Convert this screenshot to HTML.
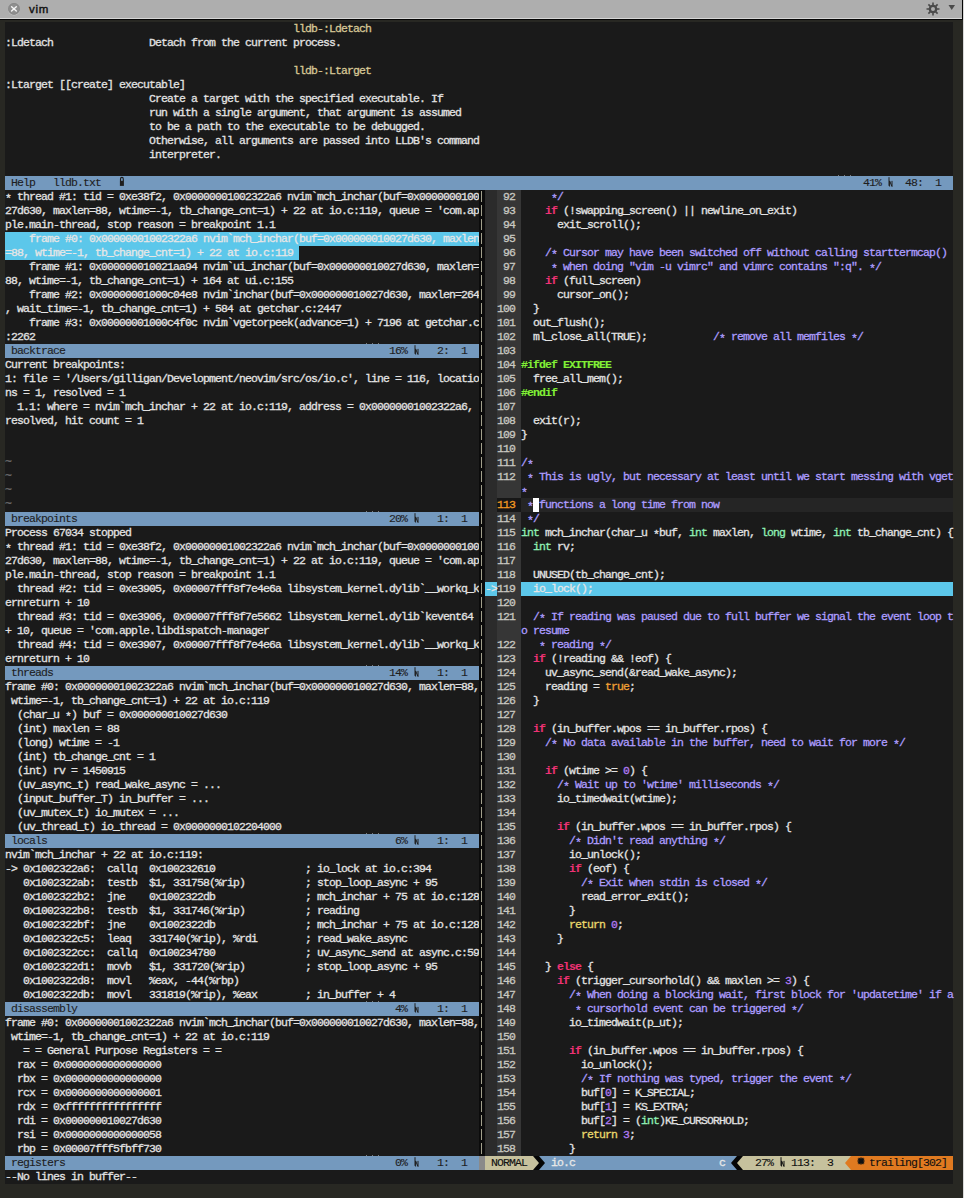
<!DOCTYPE html>
<html><head><meta charset="utf-8"><title>vim</title>
<style>
html,body{margin:0;padding:0;}
body{width:964px;height:1198px;position:relative;overflow:hidden;background:#282823;}
.r{position:absolute;display:block;}
.t{position:absolute;height:14px;line-height:14px;white-space:pre;font-family:"Liberation Mono",monospace;font-size:11.5px;letter-spacing:-0.9011px;-webkit-text-stroke:0.3px;}
</style></head><body>
<div class="r" style="left:0;top:0;width:963px;height:18px;background:#aeaeae"></div>
<div class="r" style="left:0;top:18px;width:963px;height:1px;background:#d6d6d6"></div>
<div class="r" style="left:0;top:19px;width:963px;height:1px;background:#050505"></div>
<div class="r" style="left:962px;top:0;width:1px;height:20px;background:#050505"></div>
<div class="r" style="left:963px;top:0;width:1px;height:1198px;background:#d9d9d9"></div>
<svg class="r" style="left:7px;top:2px" width="14" height="15" viewBox="0 0 14 15"><circle cx="7" cy="7.6" r="5.9" fill="#d2d2d2" opacity="0.8"/><circle cx="7" cy="6.9" r="5.9" fill="#8f8f8f"/><circle cx="7" cy="6.9" r="5.4" fill="none" stroke="#858585" stroke-width="0.8"/><path d="M4.6 4.7L9.3 9.1M9.3 4.7L4.6 9.1" stroke="#f6f6f6" stroke-width="1.4" stroke-linecap="round"/></svg>
<div class="r" style="left:29px;top:2.5px;height:14px;line-height:14px;font:11.5px 'Liberation Sans',sans-serif;-webkit-text-stroke:0.4px #111;letter-spacing:0.7px;color:#111">vim</div>
<svg class="r" style="left:926px;top:2px" width="14" height="14" viewBox="0 0 14 14"><g stroke="#4a4a4a" stroke-width="1.6"><path d="M7 0.5V13.5M0.5 7H13.5M2.4 2.4L11.6 11.6M11.6 2.4L2.4 11.6"/></g><circle cx="7" cy="7" r="4.3" fill="#4a4a4a"/><circle cx="7" cy="7" r="2" fill="#aeaeae"/></svg>
<svg class="r" style="left:947px;top:4px" width="9" height="8" viewBox="0 0 9 8"><path d="M1.5 1H8L4.75 6Z" fill="#4a4a4a"/></svg>
<div class="r" style="left:5px;top:22px;width:948px;height:1162px;background:#1a1a1a"></div>
<div class="t" style="left:293px;top:22px;color:#d6c795">lldb-:Ldetach</div>
<div class="t" style="left:5px;top:36px;color:#e2e2e2">:Ldetach</div>
<div class="t" style="left:149px;top:36px;color:#e2e2e2">Detach from the current process.</div>
<div class="t" style="left:293px;top:64px;color:#d6c795">lldb-:Ltarget</div>
<div class="t" style="left:5px;top:78px;color:#e2e2e2">:Ltarget [[create] executable]</div>
<div class="t" style="left:149px;top:92px;color:#e2e2e2">Create a target with the specified executable. If</div>
<div class="t" style="left:149px;top:106px;color:#e2e2e2">run with a single argument, that argument is assumed</div>
<div class="t" style="left:149px;top:120px;color:#e2e2e2">to be a path to the executable to be debugged.</div>
<div class="t" style="left:149px;top:134px;color:#e2e2e2">Otherwise, all arguments are passed into LLDB's command</div>
<div class="t" style="left:149px;top:148px;color:#e2e2e2">interpreter.</div>
<div class="r" style="left:5px;top:176px;width:948px;height:14px;background:#7499be"></div>
<div class="t" style="left:11px;top:176px;color:#1e1e1e;-webkit-text-stroke:0.12px">Help</div>
<div class="t" style="left:53px;top:176px;color:#1e1e1e;-webkit-text-stroke:0.12px">lldb.txt</div>
<svg class="r" style="left:119px;top:176px" width="6" height="14" viewBox="0 0 6 14"><path d="M1.5 5V3A1.4 1.6 0 0 1 4.3 3V5" stroke="#1e1e1e" stroke-width="1.1" fill="none"/><rect x="0.9" y="4.8" width="4" height="5.1" fill="#1e1e1e"/></svg>
<div class="t" style="left:863px;top:176px;color:#1e1e1e;-webkit-text-stroke:0.12px">41%</div>
<svg class="r" style="left:887px;top:176px" width="6" height="14" viewBox="0 0 6 14"><path d="M2 1.2V9.8M2.6 10.5V4.9L5 10.5V4.9" stroke="#1e1e1e" stroke-width="1" fill="none"/></svg>
<div class="t" style="left:905px;top:176px;color:#1e1e1e;-webkit-text-stroke:0.12px">48:</div>
<div class="t" style="left:935px;top:176px;color:#1e1e1e;-webkit-text-stroke:0.12px">1</div>
<div class="r" style="left:5px;top:232px;width:474px;height:14px;background:#5cc7ea"></div>
<div class="r" style="left:5px;top:246px;width:294px;height:14px;background:#5cc7ea"></div>
<div class="t" style="left:5px;top:191.5px;color:#e2e2e2">*</div>
<div class="t" style="left:17px;top:190px;color:#e2e2e2">thread #1: tid = 0xe38f2, 0x00000001002322a6 nvim`mch_inchar(buf=0x0000000100</div>
<div class="t" style="left:5px;top:204px;color:#e2e2e2">27d630, maxlen=88, wtime=-1, tb_change_cnt=1) + 22 at io.c:119, queue = 'com.ap</div>
<div class="t" style="left:5px;top:218px;color:#e2e2e2">ple.main-thread, stop reason = breakpoint 1.1</div>
<div class="t" style="left:29px;top:232px;color:#e6e6e6">frame #0: 0x00000001002322a6 nvim`mch_inchar(buf=0x000000010027d630, maxlen</div>
<div class="t" style="left:5px;top:246px;color:#e6e6e6">=88, wtime=-1, tb_change_cnt=1) + 22 at io.c:119</div>
<div class="t" style="left:29px;top:260px;color:#e2e2e2">frame #1: 0x000000010021aa94 nvim`ui_inchar(buf=0x000000010027d630, maxlen=</div>
<div class="t" style="left:5px;top:274px;color:#e2e2e2">88, wtime=-1, tb_change_cnt=1) + 164 at ui.c:155</div>
<div class="t" style="left:29px;top:288px;color:#e2e2e2">frame #2: 0x00000001000c04e8 nvim`inchar(buf=0x000000010027d630, maxlen=264</div>
<div class="t" style="left:5px;top:302px;color:#e2e2e2">, wait_time=-1, tb_change_cnt=1) + 584 at getchar.c:2447</div>
<div class="t" style="left:29px;top:316px;color:#e2e2e2">frame #3: 0x00000001000c4f0c nvim`vgetorpeek(advance=1) + 7196 at getchar.c</div>
<div class="t" style="left:5px;top:330px;color:#e2e2e2">:2262</div>
<div class="t" style="left:5px;top:358px;color:#e2e2e2">Current breakpoints:</div>
<div class="t" style="left:5px;top:372px;color:#e2e2e2">1: file = '/Users/gilligan/Development/neovim/src/os/io.c', line = 116, locatio</div>
<div class="t" style="left:5px;top:386px;color:#e2e2e2">ns = 1, resolved = 1</div>
<div class="t" style="left:17px;top:400px;color:#e2e2e2">1.1: where = nvim`mch_inchar + 22 at io.c:119, address = 0x00000001002322a6,</div>
<div class="t" style="left:5px;top:414px;color:#e2e2e2">resolved, hit count = 1</div>
<div class="t" style="left:5px;top:526px;color:#e2e2e2">Process 67034 stopped</div>
<div class="t" style="left:5px;top:541.5px;color:#e2e2e2">*</div>
<div class="t" style="left:17px;top:540px;color:#e2e2e2">thread #1: tid = 0xe38f2, 0x00000001002322a6 nvim`mch_inchar(buf=0x0000000100</div>
<div class="t" style="left:5px;top:554px;color:#e2e2e2">27d630, maxlen=88, wtime=-1, tb_change_cnt=1) + 22 at io.c:119, queue = 'com.ap</div>
<div class="t" style="left:5px;top:568px;color:#e2e2e2">ple.main-thread, stop reason = breakpoint 1.1</div>
<div class="t" style="left:17px;top:582px;color:#e2e2e2">thread #2: tid = 0xe3905, 0x00007fff8f7e4e6a libsystem_kernel.dylib`__workq_k</div>
<div class="t" style="left:5px;top:596px;color:#e2e2e2">ernreturn + 10</div>
<div class="t" style="left:17px;top:610px;color:#e2e2e2">thread #3: tid = 0xe3906, 0x00007fff8f7e5662 libsystem_kernel.dylib`kevent64</div>
<div class="t" style="left:5px;top:624px;color:#e2e2e2">+ 10, queue = 'com.apple.libdispatch-manager</div>
<div class="t" style="left:17px;top:638px;color:#e2e2e2">thread #4: tid = 0xe3907, 0x00007fff8f7e4e6a libsystem_kernel.dylib`__workq_k</div>
<div class="t" style="left:5px;top:652px;color:#e2e2e2">ernreturn + 10</div>
<div class="t" style="left:5px;top:680px;color:#e2e2e2">frame #0: 0x00000001002322a6 nvim`mch_inchar(buf=0x000000010027d630, maxlen=88,</div>
<div class="t" style="left:11px;top:694px;color:#e2e2e2">wtime=-1, tb_change_cnt=1) + 22 at io.c:119</div>
<div class="t" style="left:17px;top:708px;color:#e2e2e2">(char_u</div>
<div class="t" style="left:65px;top:709.5px;color:#e2e2e2">*</div>
<div class="t" style="left:71px;top:708px;color:#e2e2e2">) buf = 0x000000010027d630</div>
<div class="t" style="left:17px;top:722px;color:#e2e2e2">(int) maxlen = 88</div>
<div class="t" style="left:17px;top:736px;color:#e2e2e2">(long) wtime = -1</div>
<div class="t" style="left:17px;top:750px;color:#e2e2e2">(int) tb_change_cnt = 1</div>
<div class="t" style="left:17px;top:764px;color:#e2e2e2">(int) rv = 1450915</div>
<div class="t" style="left:17px;top:778px;color:#e2e2e2">(uv_async_t) read_wake_async = ...</div>
<div class="t" style="left:17px;top:792px;color:#e2e2e2">(input_buffer_T) in_buffer = ...</div>
<div class="t" style="left:17px;top:806px;color:#e2e2e2">(uv_mutex_t) io_mutex = ...</div>
<div class="t" style="left:17px;top:820px;color:#e2e2e2">(uv_thread_t) io_thread = 0x0000000102204000</div>
<div class="t" style="left:5px;top:848px;color:#e2e2e2">nvim`mch_inchar + 22 at io.c:119:</div>
<div class="t" style="left:5px;top:1016px;color:#e2e2e2">frame #0: 0x00000001002322a6 nvim`mch_inchar(buf=0x000000010027d630, maxlen=88,</div>
<div class="t" style="left:11px;top:1030px;color:#e2e2e2">wtime=-1, tb_change_cnt=1) + 22 at io.c:119</div>
<div class="t" style="left:23px;top:1044px;color:#e2e2e2">= = General Purpose Registers = =</div>
<div class="t" style="left:17px;top:1058px;color:#e2e2e2">rax = 0x0000000000000000</div>
<div class="t" style="left:17px;top:1072px;color:#e2e2e2">rbx = 0x0000000000000000</div>
<div class="t" style="left:17px;top:1086px;color:#e2e2e2">rcx = 0x0000000000000001</div>
<div class="t" style="left:17px;top:1100px;color:#e2e2e2">rdx = 0xffffffffffffffff</div>
<div class="t" style="left:17px;top:1114px;color:#e2e2e2">rdi = 0x000000010027d630</div>
<div class="t" style="left:17px;top:1128px;color:#e2e2e2">rsi = 0x0000000000000058</div>
<div class="t" style="left:17px;top:1142px;color:#e2e2e2">rbp = 0x00007fff5fbff730</div>
<div class="t" style="left:5px;top:862px;color:#e2e2e2">-&gt; 0x1002322a6:</div>
<div class="t" style="left:107px;top:862px;color:#e2e2e2">callq</div>
<div class="t" style="left:149px;top:862px;color:#e2e2e2">0x100232610</div>
<div class="t" style="left:305px;top:862px;color:#e2e2e2">; io_lock at io.c:394</div>
<div class="t" style="left:23px;top:876px;color:#e2e2e2">0x1002322ab:</div>
<div class="t" style="left:107px;top:876px;color:#e2e2e2">testb</div>
<div class="t" style="left:149px;top:876px;color:#e2e2e2">$1, 331758(%rip)</div>
<div class="t" style="left:305px;top:876px;color:#e2e2e2">; stop_loop_async + 95</div>
<div class="t" style="left:23px;top:890px;color:#e2e2e2">0x1002322b2:</div>
<div class="t" style="left:107px;top:890px;color:#e2e2e2">jne</div>
<div class="t" style="left:149px;top:890px;color:#e2e2e2">0x1002322db</div>
<div class="t" style="left:305px;top:890px;color:#e2e2e2">; mch_inchar + 75 at io.c:128</div>
<div class="t" style="left:23px;top:904px;color:#e2e2e2">0x1002322b8:</div>
<div class="t" style="left:107px;top:904px;color:#e2e2e2">testb</div>
<div class="t" style="left:149px;top:904px;color:#e2e2e2">$1, 331746(%rip)</div>
<div class="t" style="left:305px;top:904px;color:#e2e2e2">; reading</div>
<div class="t" style="left:23px;top:918px;color:#e2e2e2">0x1002322bf:</div>
<div class="t" style="left:107px;top:918px;color:#e2e2e2">jne</div>
<div class="t" style="left:149px;top:918px;color:#e2e2e2">0x1002322db</div>
<div class="t" style="left:305px;top:918px;color:#e2e2e2">; mch_inchar + 75 at io.c:128</div>
<div class="t" style="left:23px;top:932px;color:#e2e2e2">0x1002322c5:</div>
<div class="t" style="left:107px;top:932px;color:#e2e2e2">leaq</div>
<div class="t" style="left:149px;top:932px;color:#e2e2e2">331740(%rip), %rdi</div>
<div class="t" style="left:305px;top:932px;color:#e2e2e2">; read_wake_async</div>
<div class="t" style="left:23px;top:946px;color:#e2e2e2">0x1002322cc:</div>
<div class="t" style="left:107px;top:946px;color:#e2e2e2">callq</div>
<div class="t" style="left:149px;top:946px;color:#e2e2e2">0x100234780</div>
<div class="t" style="left:305px;top:946px;color:#e2e2e2">; uv_async_send at async.c:59</div>
<div class="t" style="left:23px;top:960px;color:#e2e2e2">0x1002322d1:</div>
<div class="t" style="left:107px;top:960px;color:#e2e2e2">movb</div>
<div class="t" style="left:149px;top:960px;color:#e2e2e2">$1, 331720(%rip)</div>
<div class="t" style="left:305px;top:960px;color:#e2e2e2">; stop_loop_async + 95</div>
<div class="t" style="left:23px;top:974px;color:#e2e2e2">0x1002322d8:</div>
<div class="t" style="left:107px;top:974px;color:#e2e2e2">movl</div>
<div class="t" style="left:149px;top:974px;color:#e2e2e2">%eax, -44(%rbp)</div>
<div class="t" style="left:23px;top:988px;color:#e2e2e2">0x1002322db:</div>
<div class="t" style="left:107px;top:988px;color:#e2e2e2">movl</div>
<div class="t" style="left:149px;top:988px;color:#e2e2e2">331819(%rip), %eax</div>
<div class="t" style="left:305px;top:988px;color:#e2e2e2">; in_buffer + 4</div>
<div class="t" style="left:5px;top:456px;color:#727272;margin-top:-1px">~</div>
<div class="t" style="left:5px;top:470px;color:#727272;margin-top:-1px">~</div>
<div class="t" style="left:5px;top:484px;color:#727272;margin-top:-1px">~</div>
<div class="t" style="left:5px;top:498px;color:#727272;margin-top:-1px">~</div>
<div class="r" style="left:5px;top:344px;width:474px;height:14px;background:#7499be"></div>
<div class="t" style="left:11px;top:344px;color:#1e1e1e;-webkit-text-stroke:0.12px">backtrace</div>
<div class="t" style="left:389px;top:344px;color:#1e1e1e;-webkit-text-stroke:0.12px">16%</div>
<svg class="r" style="left:413px;top:344px" width="6" height="14" viewBox="0 0 6 14"><path d="M2 1.2V9.8M2.6 10.5V4.9L5 10.5V4.9" stroke="#1e1e1e" stroke-width="1" fill="none"/></svg>
<div class="t" style="left:437px;top:344px;color:#1e1e1e;-webkit-text-stroke:0.12px">2:</div>
<div class="t" style="left:461px;top:344px;color:#1e1e1e;-webkit-text-stroke:0.12px">1</div>
<div class="r" style="left:5px;top:512px;width:474px;height:14px;background:#7499be"></div>
<div class="t" style="left:11px;top:512px;color:#1e1e1e;-webkit-text-stroke:0.12px">breakpoints</div>
<div class="t" style="left:389px;top:512px;color:#1e1e1e;-webkit-text-stroke:0.12px">20%</div>
<svg class="r" style="left:413px;top:512px" width="6" height="14" viewBox="0 0 6 14"><path d="M2 1.2V9.8M2.6 10.5V4.9L5 10.5V4.9" stroke="#1e1e1e" stroke-width="1" fill="none"/></svg>
<div class="t" style="left:437px;top:512px;color:#1e1e1e;-webkit-text-stroke:0.12px">1:</div>
<div class="t" style="left:461px;top:512px;color:#1e1e1e;-webkit-text-stroke:0.12px">1</div>
<div class="r" style="left:5px;top:666px;width:474px;height:14px;background:#7499be"></div>
<div class="t" style="left:11px;top:666px;color:#1e1e1e;-webkit-text-stroke:0.12px">threads</div>
<div class="t" style="left:389px;top:666px;color:#1e1e1e;-webkit-text-stroke:0.12px">14%</div>
<svg class="r" style="left:413px;top:666px" width="6" height="14" viewBox="0 0 6 14"><path d="M2 1.2V9.8M2.6 10.5V4.9L5 10.5V4.9" stroke="#1e1e1e" stroke-width="1" fill="none"/></svg>
<div class="t" style="left:437px;top:666px;color:#1e1e1e;-webkit-text-stroke:0.12px">1:</div>
<div class="t" style="left:461px;top:666px;color:#1e1e1e;-webkit-text-stroke:0.12px">1</div>
<div class="r" style="left:5px;top:834px;width:474px;height:14px;background:#7499be"></div>
<div class="t" style="left:11px;top:834px;color:#1e1e1e;-webkit-text-stroke:0.12px">locals</div>
<div class="t" style="left:395px;top:834px;color:#1e1e1e;-webkit-text-stroke:0.12px">6%</div>
<svg class="r" style="left:413px;top:834px" width="6" height="14" viewBox="0 0 6 14"><path d="M2 1.2V9.8M2.6 10.5V4.9L5 10.5V4.9" stroke="#1e1e1e" stroke-width="1" fill="none"/></svg>
<div class="t" style="left:437px;top:834px;color:#1e1e1e;-webkit-text-stroke:0.12px">1:</div>
<div class="t" style="left:461px;top:834px;color:#1e1e1e;-webkit-text-stroke:0.12px">1</div>
<div class="r" style="left:5px;top:1002px;width:474px;height:14px;background:#7499be"></div>
<div class="t" style="left:11px;top:1002px;color:#1e1e1e;-webkit-text-stroke:0.12px">disassembly</div>
<div class="t" style="left:395px;top:1002px;color:#1e1e1e;-webkit-text-stroke:0.12px">4%</div>
<svg class="r" style="left:413px;top:1002px" width="6" height="14" viewBox="0 0 6 14"><path d="M2 1.2V9.8M2.6 10.5V4.9L5 10.5V4.9" stroke="#1e1e1e" stroke-width="1" fill="none"/></svg>
<div class="t" style="left:437px;top:1002px;color:#1e1e1e;-webkit-text-stroke:0.12px">1:</div>
<div class="t" style="left:461px;top:1002px;color:#1e1e1e;-webkit-text-stroke:0.12px">1</div>
<div class="r" style="left:5px;top:1156px;width:474px;height:14px;background:#7499be"></div>
<div class="t" style="left:11px;top:1156px;color:#1e1e1e;-webkit-text-stroke:0.12px">registers</div>
<div class="t" style="left:395px;top:1156px;color:#1e1e1e;-webkit-text-stroke:0.12px">0%</div>
<svg class="r" style="left:413px;top:1156px" width="6" height="14" viewBox="0 0 6 14"><path d="M2 1.2V9.8M2.6 10.5V4.9L5 10.5V4.9" stroke="#1e1e1e" stroke-width="1" fill="none"/></svg>
<div class="t" style="left:437px;top:1156px;color:#1e1e1e;-webkit-text-stroke:0.12px">1:</div>
<div class="t" style="left:461px;top:1156px;color:#1e1e1e;-webkit-text-stroke:0.12px">1</div>
<div class="r" style="left:366px;top:343px;width:1px;height:1px;background:#7d7d7d"></div>
<div class="r" style="left:372px;top:343px;width:1px;height:1px;background:#7d7d7d"></div>
<div class="r" style="left:378px;top:343px;width:1px;height:1px;background:#7d7d7d"></div>
<div class="r" style="left:366px;top:511px;width:1px;height:1px;background:#7d7d7d"></div>
<div class="r" style="left:372px;top:511px;width:1px;height:1px;background:#7d7d7d"></div>
<div class="r" style="left:378px;top:511px;width:1px;height:1px;background:#7d7d7d"></div>
<div class="r" style="left:366px;top:665px;width:1px;height:1px;background:#7d7d7d"></div>
<div class="r" style="left:372px;top:665px;width:1px;height:1px;background:#7d7d7d"></div>
<div class="r" style="left:378px;top:665px;width:1px;height:1px;background:#7d7d7d"></div>
<div class="r" style="left:366px;top:833px;width:1px;height:1px;background:#7d7d7d"></div>
<div class="r" style="left:372px;top:833px;width:1px;height:1px;background:#7d7d7d"></div>
<div class="r" style="left:378px;top:833px;width:1px;height:1px;background:#7d7d7d"></div>
<div class="r" style="left:366px;top:1001px;width:1px;height:1px;background:#7d7d7d"></div>
<div class="r" style="left:372px;top:1001px;width:1px;height:1px;background:#7d7d7d"></div>
<div class="r" style="left:378px;top:1001px;width:1px;height:1px;background:#7d7d7d"></div>
<div class="r" style="left:366px;top:1155px;width:1px;height:1px;background:#7d7d7d"></div>
<div class="r" style="left:372px;top:1155px;width:1px;height:1px;background:#7d7d7d"></div>
<div class="r" style="left:378px;top:1155px;width:1px;height:1px;background:#7d7d7d"></div>
<div class="r" style="left:838px;top:175px;width:1px;height:1px;background:#7d7d7d"></div>
<div class="r" style="left:844px;top:175px;width:1px;height:1px;background:#7d7d7d"></div>
<div class="r" style="left:850px;top:175px;width:1px;height:1px;background:#7d7d7d"></div>
<div class="r" style="left:479px;top:190px;width:6px;height:966px;background:#0b0b0b"></div>
<div class="r" style="left:481px;top:191px;width:1.3px;height:11px;background:#a2a08c"></div>
<div class="r" style="left:481px;top:205px;width:1.3px;height:11px;background:#a2a08c"></div>
<div class="r" style="left:481px;top:219px;width:1.3px;height:11px;background:#a2a08c"></div>
<div class="r" style="left:481px;top:233px;width:1.3px;height:11px;background:#a2a08c"></div>
<div class="r" style="left:481px;top:247px;width:1.3px;height:11px;background:#a2a08c"></div>
<div class="r" style="left:481px;top:261px;width:1.3px;height:11px;background:#a2a08c"></div>
<div class="r" style="left:481px;top:275px;width:1.3px;height:11px;background:#a2a08c"></div>
<div class="r" style="left:481px;top:289px;width:1.3px;height:11px;background:#a2a08c"></div>
<div class="r" style="left:481px;top:303px;width:1.3px;height:11px;background:#a2a08c"></div>
<div class="r" style="left:481px;top:317px;width:1.3px;height:11px;background:#a2a08c"></div>
<div class="r" style="left:481px;top:331px;width:1.3px;height:11px;background:#a2a08c"></div>
<div class="r" style="left:481px;top:345px;width:1.3px;height:11px;background:#a2a08c"></div>
<div class="r" style="left:481px;top:359px;width:1.3px;height:11px;background:#a2a08c"></div>
<div class="r" style="left:481px;top:373px;width:1.3px;height:11px;background:#a2a08c"></div>
<div class="r" style="left:481px;top:387px;width:1.3px;height:11px;background:#a2a08c"></div>
<div class="r" style="left:481px;top:401px;width:1.3px;height:11px;background:#a2a08c"></div>
<div class="r" style="left:481px;top:415px;width:1.3px;height:11px;background:#a2a08c"></div>
<div class="r" style="left:481px;top:429px;width:1.3px;height:11px;background:#a2a08c"></div>
<div class="r" style="left:481px;top:443px;width:1.3px;height:11px;background:#a2a08c"></div>
<div class="r" style="left:481px;top:457px;width:1.3px;height:11px;background:#a2a08c"></div>
<div class="r" style="left:481px;top:471px;width:1.3px;height:11px;background:#a2a08c"></div>
<div class="r" style="left:481px;top:485px;width:1.3px;height:11px;background:#a2a08c"></div>
<div class="r" style="left:481px;top:499px;width:1.3px;height:11px;background:#a2a08c"></div>
<div class="r" style="left:481px;top:513px;width:1.3px;height:11px;background:#a2a08c"></div>
<div class="r" style="left:481px;top:527px;width:1.3px;height:11px;background:#a2a08c"></div>
<div class="r" style="left:481px;top:541px;width:1.3px;height:11px;background:#a2a08c"></div>
<div class="r" style="left:481px;top:555px;width:1.3px;height:11px;background:#a2a08c"></div>
<div class="r" style="left:481px;top:569px;width:1.3px;height:11px;background:#a2a08c"></div>
<div class="r" style="left:481px;top:583px;width:1.3px;height:11px;background:#a2a08c"></div>
<div class="r" style="left:481px;top:597px;width:1.3px;height:11px;background:#a2a08c"></div>
<div class="r" style="left:481px;top:611px;width:1.3px;height:11px;background:#a2a08c"></div>
<div class="r" style="left:481px;top:625px;width:1.3px;height:11px;background:#a2a08c"></div>
<div class="r" style="left:481px;top:639px;width:1.3px;height:11px;background:#a2a08c"></div>
<div class="r" style="left:481px;top:653px;width:1.3px;height:11px;background:#a2a08c"></div>
<div class="r" style="left:481px;top:667px;width:1.3px;height:11px;background:#a2a08c"></div>
<div class="r" style="left:481px;top:681px;width:1.3px;height:11px;background:#a2a08c"></div>
<div class="r" style="left:481px;top:695px;width:1.3px;height:11px;background:#a2a08c"></div>
<div class="r" style="left:481px;top:709px;width:1.3px;height:11px;background:#a2a08c"></div>
<div class="r" style="left:481px;top:723px;width:1.3px;height:11px;background:#a2a08c"></div>
<div class="r" style="left:481px;top:737px;width:1.3px;height:11px;background:#a2a08c"></div>
<div class="r" style="left:481px;top:751px;width:1.3px;height:11px;background:#a2a08c"></div>
<div class="r" style="left:481px;top:765px;width:1.3px;height:11px;background:#a2a08c"></div>
<div class="r" style="left:481px;top:779px;width:1.3px;height:11px;background:#a2a08c"></div>
<div class="r" style="left:481px;top:793px;width:1.3px;height:11px;background:#a2a08c"></div>
<div class="r" style="left:481px;top:807px;width:1.3px;height:11px;background:#a2a08c"></div>
<div class="r" style="left:481px;top:821px;width:1.3px;height:11px;background:#a2a08c"></div>
<div class="r" style="left:481px;top:835px;width:1.3px;height:11px;background:#a2a08c"></div>
<div class="r" style="left:481px;top:849px;width:1.3px;height:11px;background:#a2a08c"></div>
<div class="r" style="left:481px;top:863px;width:1.3px;height:11px;background:#a2a08c"></div>
<div class="r" style="left:481px;top:877px;width:1.3px;height:11px;background:#a2a08c"></div>
<div class="r" style="left:481px;top:891px;width:1.3px;height:11px;background:#a2a08c"></div>
<div class="r" style="left:481px;top:905px;width:1.3px;height:11px;background:#a2a08c"></div>
<div class="r" style="left:481px;top:919px;width:1.3px;height:11px;background:#a2a08c"></div>
<div class="r" style="left:481px;top:933px;width:1.3px;height:11px;background:#a2a08c"></div>
<div class="r" style="left:481px;top:947px;width:1.3px;height:11px;background:#a2a08c"></div>
<div class="r" style="left:481px;top:961px;width:1.3px;height:11px;background:#a2a08c"></div>
<div class="r" style="left:481px;top:975px;width:1.3px;height:11px;background:#a2a08c"></div>
<div class="r" style="left:481px;top:989px;width:1.3px;height:11px;background:#a2a08c"></div>
<div class="r" style="left:481px;top:1003px;width:1.3px;height:11px;background:#a2a08c"></div>
<div class="r" style="left:481px;top:1017px;width:1.3px;height:11px;background:#a2a08c"></div>
<div class="r" style="left:481px;top:1031px;width:1.3px;height:11px;background:#a2a08c"></div>
<div class="r" style="left:481px;top:1045px;width:1.3px;height:11px;background:#a2a08c"></div>
<div class="r" style="left:481px;top:1059px;width:1.3px;height:11px;background:#a2a08c"></div>
<div class="r" style="left:481px;top:1073px;width:1.3px;height:11px;background:#a2a08c"></div>
<div class="r" style="left:481px;top:1087px;width:1.3px;height:11px;background:#a2a08c"></div>
<div class="r" style="left:481px;top:1101px;width:1.3px;height:11px;background:#a2a08c"></div>
<div class="r" style="left:481px;top:1115px;width:1.3px;height:11px;background:#a2a08c"></div>
<div class="r" style="left:481px;top:1129px;width:1.3px;height:11px;background:#a2a08c"></div>
<div class="r" style="left:481px;top:1143px;width:1.3px;height:11px;background:#a2a08c"></div>
<div class="r" style="left:479px;top:1156px;width:6px;height:14px;background:#8a8a8a"></div>
<div class="r" style="left:485px;top:190px;width:12px;height:966px;background:#2b2b2b"></div>
<div class="r" style="left:497px;top:190px;width:24px;height:966px;background:#363636"></div>
<div class="t" style="left:503px;top:190px;color:#c9c9c2">92</div>
<div class="t" style="left:551px;top:191.5px;color:#ad9dff">*</div>
<div class="t" style="left:557px;top:190px;color:#ad9dff">/</div>
<div class="t" style="left:503px;top:204px;color:#c9c9c2">93</div>
<div class="t" style="left:545px;top:204px;color:#ee3274;font-weight:bold;-webkit-text-stroke:0.1px">if</div>
<div class="t" style="left:563px;top:204px;color:#e2e2e2">(!swapping_screen() || newline_on_exit)</div>
<div class="t" style="left:503px;top:218px;color:#c9c9c2">94</div>
<div class="t" style="left:557px;top:218px;color:#e2e2e2">exit_scroll();</div>
<div class="t" style="left:503px;top:232px;color:#c9c9c2">95</div>
<div class="t" style="left:503px;top:246px;color:#c9c9c2">96</div>
<div class="t" style="left:545px;top:246px;color:#ad9dff">/</div>
<div class="t" style="left:551px;top:247.5px;color:#ad9dff">*</div>
<div class="t" style="left:563px;top:246px;color:#ad9dff">Cursor may have been switched off without calling starttermcap()</div>
<div class="t" style="left:503px;top:260px;color:#c9c9c2">97</div>
<div class="t" style="left:551px;top:261.5px;color:#ad9dff">*</div>
<div class="t" style="left:563px;top:260px;color:#ad9dff">when doing "vim -u vimrc" and vimrc contains ":q".</div>
<div class="t" style="left:869px;top:261.5px;color:#ad9dff">*</div>
<div class="t" style="left:875px;top:260px;color:#ad9dff">/</div>
<div class="t" style="left:503px;top:274px;color:#c9c9c2">98</div>
<div class="t" style="left:545px;top:274px;color:#ee3274;font-weight:bold;-webkit-text-stroke:0.1px">if</div>
<div class="t" style="left:563px;top:274px;color:#e2e2e2">(full_screen)</div>
<div class="t" style="left:503px;top:288px;color:#c9c9c2">99</div>
<div class="t" style="left:557px;top:288px;color:#e2e2e2">cursor_on();</div>
<div class="t" style="left:497px;top:302px;color:#c9c9c2">100</div>
<div class="t" style="left:533px;top:302px;color:#e2e2e2">}</div>
<div class="t" style="left:497px;top:316px;color:#c9c9c2">101</div>
<div class="t" style="left:533px;top:316px;color:#e2e2e2">out_flush();</div>
<div class="t" style="left:497px;top:330px;color:#c9c9c2">102</div>
<div class="t" style="left:533px;top:330px;color:#e2e2e2">ml_close_all(TRUE);</div>
<div class="t" style="left:713px;top:330px;color:#ad9dff">/</div>
<div class="t" style="left:719px;top:331.5px;color:#ad9dff">*</div>
<div class="t" style="left:731px;top:330px;color:#ad9dff">remove all memfiles</div>
<div class="t" style="left:851px;top:331.5px;color:#ad9dff">*</div>
<div class="t" style="left:857px;top:330px;color:#ad9dff">/</div>
<div class="t" style="left:497px;top:344px;color:#c9c9c2">103</div>
<div class="t" style="left:497px;top:358px;color:#c9c9c2">104</div>
<div class="t" style="left:521px;top:358px;color:#82f036;font-weight:bold;-webkit-text-stroke:0.1px">#ifdef EXITFREE</div>
<div class="t" style="left:497px;top:372px;color:#c9c9c2">105</div>
<div class="t" style="left:533px;top:372px;color:#e2e2e2">free_all_mem();</div>
<div class="t" style="left:497px;top:386px;color:#c9c9c2">106</div>
<div class="t" style="left:521px;top:386px;color:#82f036;font-weight:bold;-webkit-text-stroke:0.1px">#endif</div>
<div class="t" style="left:497px;top:400px;color:#c9c9c2">107</div>
<div class="t" style="left:497px;top:414px;color:#c9c9c2">108</div>
<div class="t" style="left:533px;top:414px;color:#e2e2e2">exit(r);</div>
<div class="t" style="left:497px;top:428px;color:#c9c9c2">109</div>
<div class="t" style="left:521px;top:428px;color:#e2e2e2">}</div>
<div class="t" style="left:497px;top:442px;color:#c9c9c2">110</div>
<div class="t" style="left:497px;top:456px;color:#c9c9c2">111</div>
<div class="t" style="left:521px;top:456px;color:#ad9dff">/</div>
<div class="t" style="left:527px;top:457.5px;color:#ad9dff">*</div>
<div class="t" style="left:497px;top:470px;color:#c9c9c2">112</div>
<div class="t" style="left:527px;top:471.5px;color:#ad9dff">*</div>
<div class="t" style="left:539px;top:470px;color:#ad9dff">This is ugly, but necessary at least until we start messing with vget</div>
<div class="t" style="left:521px;top:485.5px;color:#ad9dff">*</div>
<div class="r" style="left:497px;top:498px;width:24px;height:14px;background:#171717"></div>
<div class="r" style="left:521px;top:498px;width:432px;height:14px;background:#252525"></div>
<div class="t" style="left:497px;top:498px;color:#f39a22">113</div>
<div class="r" style="left:533px;top:498px;width:6px;height:14px;background:#ffffff"></div>
<div class="t" style="left:527px;top:499.5px;color:#ad9dff">*</div>
<div class="t" style="left:539px;top:498px;color:#ad9dff">functions a long time from now</div>
<div class="t" style="left:497px;top:512px;color:#c9c9c2">114</div>
<div class="t" style="left:527px;top:513.5px;color:#ad9dff">*</div>
<div class="t" style="left:533px;top:512px;color:#ad9dff">/</div>
<div class="t" style="left:497px;top:526px;color:#c9c9c2">115</div>
<div class="t" style="left:521px;top:526px;color:#8ff0b4">int</div>
<div class="t" style="left:545px;top:526px;color:#e2e2e2">mch_inchar(char_u</div>
<div class="t" style="left:653px;top:527.5px;color:#e2e2e2">*</div>
<div class="t" style="left:659px;top:526px;color:#e2e2e2">buf,</div>
<div class="t" style="left:689px;top:526px;color:#8ff0b4">int</div>
<div class="t" style="left:713px;top:526px;color:#e2e2e2">maxlen,</div>
<div class="t" style="left:761px;top:526px;color:#8ff0b4">long</div>
<div class="t" style="left:791px;top:526px;color:#e2e2e2">wtime,</div>
<div class="t" style="left:833px;top:526px;color:#8ff0b4">int</div>
<div class="t" style="left:857px;top:526px;color:#e2e2e2">tb_change_cnt) {</div>
<div class="t" style="left:497px;top:540px;color:#c9c9c2">116</div>
<div class="t" style="left:533px;top:540px;color:#8ff0b4">int</div>
<div class="t" style="left:557px;top:540px;color:#e2e2e2">rv;</div>
<div class="t" style="left:497px;top:554px;color:#c9c9c2">117</div>
<div class="t" style="left:497px;top:568px;color:#c9c9c2">118</div>
<div class="t" style="left:533px;top:568px;color:#e2e2e2">UNUSED(tb_change_cnt);</div>
<div class="r" style="left:485px;top:582px;width:12px;height:14px;background:#5cc7ea"></div>
<div class="r" style="left:521px;top:582px;width:432px;height:14px;background:#5cc7ea"></div>
<div class="t" style="left:485px;top:582px;color:#e6e6e6">-&gt;</div>
<div class="t" style="left:497px;top:582px;color:#c9c9c2">119</div>
<div class="t" style="left:533px;top:582px;color:#e6e6e6">io_lock();</div>
<div class="t" style="left:497px;top:596px;color:#c9c9c2">120</div>
<div class="t" style="left:497px;top:610px;color:#c9c9c2">121</div>
<div class="t" style="left:533px;top:610px;color:#ad9dff">/</div>
<div class="t" style="left:539px;top:611.5px;color:#ad9dff">*</div>
<div class="t" style="left:551px;top:610px;color:#ad9dff">If reading was paused due to full buffer we signal the event loop t</div>
<div class="t" style="left:521px;top:624px;color:#ad9dff">o resume</div>
<div class="t" style="left:497px;top:638px;color:#c9c9c2">122</div>
<div class="t" style="left:539px;top:639.5px;color:#ad9dff">*</div>
<div class="t" style="left:551px;top:638px;color:#ad9dff">reading</div>
<div class="t" style="left:599px;top:639.5px;color:#ad9dff">*</div>
<div class="t" style="left:605px;top:638px;color:#ad9dff">/</div>
<div class="t" style="left:497px;top:652px;color:#c9c9c2">123</div>
<div class="t" style="left:533px;top:652px;color:#ee3274;font-weight:bold;-webkit-text-stroke:0.1px">if</div>
<div class="t" style="left:551px;top:652px;color:#e2e2e2">(!reading &amp;&amp; !eof) {</div>
<div class="t" style="left:497px;top:666px;color:#c9c9c2">124</div>
<div class="t" style="left:545px;top:666px;color:#e2e2e2">uv_async_send(&amp;read_wake_async);</div>
<div class="t" style="left:497px;top:680px;color:#c9c9c2">125</div>
<div class="t" style="left:545px;top:680px;color:#e2e2e2">reading =</div>
<div class="t" style="left:605px;top:680px;color:#f0a035">true</div>
<div class="t" style="left:629px;top:680px;color:#e2e2e2">;</div>
<div class="t" style="left:497px;top:694px;color:#c9c9c2">126</div>
<div class="t" style="left:533px;top:694px;color:#e2e2e2">}</div>
<div class="t" style="left:497px;top:708px;color:#c9c9c2">127</div>
<div class="t" style="left:497px;top:722px;color:#c9c9c2">128</div>
<div class="t" style="left:533px;top:722px;color:#ee3274;font-weight:bold;-webkit-text-stroke:0.1px">if</div>
<div class="t" style="left:551px;top:722px;color:#e2e2e2">(in_buffer.wpos == in_buffer.rpos) {</div>
<div class="t" style="left:497px;top:736px;color:#c9c9c2">129</div>
<div class="t" style="left:545px;top:736px;color:#ad9dff">/</div>
<div class="t" style="left:551px;top:737.5px;color:#ad9dff">*</div>
<div class="t" style="left:563px;top:736px;color:#ad9dff">No data available in the buffer, need to wait for more</div>
<div class="t" style="left:893px;top:737.5px;color:#ad9dff">*</div>
<div class="t" style="left:899px;top:736px;color:#ad9dff">/</div>
<div class="t" style="left:497px;top:750px;color:#c9c9c2">130</div>
<div class="t" style="left:497px;top:764px;color:#c9c9c2">131</div>
<div class="t" style="left:545px;top:764px;color:#ee3274;font-weight:bold;-webkit-text-stroke:0.1px">if</div>
<div class="t" style="left:563px;top:764px;color:#e2e2e2">(wtime &gt;=</div>
<div class="t" style="left:623px;top:764px;color:#b07af2">0</div>
<div class="t" style="left:629px;top:764px;color:#e2e2e2">) {</div>
<div class="t" style="left:497px;top:778px;color:#c9c9c2">132</div>
<div class="t" style="left:557px;top:778px;color:#ad9dff">/</div>
<div class="t" style="left:563px;top:779.5px;color:#ad9dff">*</div>
<div class="t" style="left:575px;top:778px;color:#ad9dff">Wait up to 'wtime' milliseconds</div>
<div class="t" style="left:767px;top:779.5px;color:#ad9dff">*</div>
<div class="t" style="left:773px;top:778px;color:#ad9dff">/</div>
<div class="t" style="left:497px;top:792px;color:#c9c9c2">133</div>
<div class="t" style="left:557px;top:792px;color:#e2e2e2">io_timedwait(wtime);</div>
<div class="t" style="left:497px;top:806px;color:#c9c9c2">134</div>
<div class="t" style="left:497px;top:820px;color:#c9c9c2">135</div>
<div class="t" style="left:557px;top:820px;color:#ee3274;font-weight:bold;-webkit-text-stroke:0.1px">if</div>
<div class="t" style="left:575px;top:820px;color:#e2e2e2">(in_buffer.wpos == in_buffer.rpos) {</div>
<div class="t" style="left:497px;top:834px;color:#c9c9c2">136</div>
<div class="t" style="left:569px;top:834px;color:#ad9dff">/</div>
<div class="t" style="left:575px;top:835.5px;color:#ad9dff">*</div>
<div class="t" style="left:587px;top:834px;color:#ad9dff">Didn't read anything</div>
<div class="t" style="left:713px;top:835.5px;color:#ad9dff">*</div>
<div class="t" style="left:719px;top:834px;color:#ad9dff">/</div>
<div class="t" style="left:497px;top:848px;color:#c9c9c2">137</div>
<div class="t" style="left:569px;top:848px;color:#e2e2e2">io_unlock();</div>
<div class="t" style="left:497px;top:862px;color:#c9c9c2">138</div>
<div class="t" style="left:569px;top:862px;color:#ee3274;font-weight:bold;-webkit-text-stroke:0.1px">if</div>
<div class="t" style="left:587px;top:862px;color:#e2e2e2">(eof) {</div>
<div class="t" style="left:497px;top:876px;color:#c9c9c2">139</div>
<div class="t" style="left:581px;top:876px;color:#ad9dff">/</div>
<div class="t" style="left:587px;top:877.5px;color:#ad9dff">*</div>
<div class="t" style="left:599px;top:876px;color:#ad9dff">Exit when stdin is closed</div>
<div class="t" style="left:755px;top:877.5px;color:#ad9dff">*</div>
<div class="t" style="left:761px;top:876px;color:#ad9dff">/</div>
<div class="t" style="left:497px;top:890px;color:#c9c9c2">140</div>
<div class="t" style="left:581px;top:890px;color:#e2e2e2">read_error_exit();</div>
<div class="t" style="left:497px;top:904px;color:#c9c9c2">141</div>
<div class="t" style="left:569px;top:904px;color:#e2e2e2">}</div>
<div class="t" style="left:497px;top:918px;color:#c9c9c2">142</div>
<div class="t" style="left:569px;top:918px;color:#ead96c">return</div>
<div class="t" style="left:611px;top:918px;color:#b07af2">0</div>
<div class="t" style="left:617px;top:918px;color:#e2e2e2">;</div>
<div class="t" style="left:497px;top:932px;color:#c9c9c2">143</div>
<div class="t" style="left:557px;top:932px;color:#e2e2e2">}</div>
<div class="t" style="left:497px;top:946px;color:#c9c9c2">144</div>
<div class="t" style="left:497px;top:960px;color:#c9c9c2">145</div>
<div class="t" style="left:545px;top:960px;color:#e2e2e2">}</div>
<div class="t" style="left:557px;top:960px;color:#ee3274;font-weight:bold;-webkit-text-stroke:0.1px">else</div>
<div class="t" style="left:587px;top:960px;color:#e2e2e2">{</div>
<div class="t" style="left:497px;top:974px;color:#c9c9c2">146</div>
<div class="t" style="left:557px;top:974px;color:#ee3274;font-weight:bold;-webkit-text-stroke:0.1px">if</div>
<div class="t" style="left:575px;top:974px;color:#e2e2e2">(trigger_cursorhold() &amp;&amp; maxlen &gt;=</div>
<div class="t" style="left:785px;top:974px;color:#b07af2">3</div>
<div class="t" style="left:791px;top:974px;color:#e2e2e2">) {</div>
<div class="t" style="left:497px;top:988px;color:#c9c9c2">147</div>
<div class="t" style="left:569px;top:988px;color:#ad9dff">/</div>
<div class="t" style="left:575px;top:989.5px;color:#ad9dff">*</div>
<div class="t" style="left:587px;top:988px;color:#ad9dff">When doing a blocking wait, first block for 'updatetime' if a</div>
<div class="t" style="left:497px;top:1002px;color:#c9c9c2">148</div>
<div class="t" style="left:575px;top:1003.5px;color:#ad9dff">*</div>
<div class="t" style="left:587px;top:1002px;color:#ad9dff">cursorhold event can be triggered</div>
<div class="t" style="left:791px;top:1003.5px;color:#ad9dff">*</div>
<div class="t" style="left:797px;top:1002px;color:#ad9dff">/</div>
<div class="t" style="left:497px;top:1016px;color:#c9c9c2">149</div>
<div class="t" style="left:569px;top:1016px;color:#e2e2e2">io_timedwait(p_ut);</div>
<div class="t" style="left:497px;top:1030px;color:#c9c9c2">150</div>
<div class="t" style="left:497px;top:1044px;color:#c9c9c2">151</div>
<div class="t" style="left:569px;top:1044px;color:#ee3274;font-weight:bold;-webkit-text-stroke:0.1px">if</div>
<div class="t" style="left:587px;top:1044px;color:#e2e2e2">(in_buffer.wpos == in_buffer.rpos) {</div>
<div class="t" style="left:497px;top:1058px;color:#c9c9c2">152</div>
<div class="t" style="left:581px;top:1058px;color:#e2e2e2">io_unlock();</div>
<div class="t" style="left:497px;top:1072px;color:#c9c9c2">153</div>
<div class="t" style="left:581px;top:1072px;color:#ad9dff">/</div>
<div class="t" style="left:587px;top:1073.5px;color:#ad9dff">*</div>
<div class="t" style="left:599px;top:1072px;color:#ad9dff">If nothing was typed, trigger the event</div>
<div class="t" style="left:839px;top:1073.5px;color:#ad9dff">*</div>
<div class="t" style="left:845px;top:1072px;color:#ad9dff">/</div>
<div class="t" style="left:497px;top:1086px;color:#c9c9c2">154</div>
<div class="t" style="left:581px;top:1086px;color:#e2e2e2">buf[</div>
<div class="t" style="left:605px;top:1086px;color:#b07af2">0</div>
<div class="t" style="left:611px;top:1086px;color:#e2e2e2">] = K_SPECIAL;</div>
<div class="t" style="left:497px;top:1100px;color:#c9c9c2">155</div>
<div class="t" style="left:581px;top:1100px;color:#e2e2e2">buf[</div>
<div class="t" style="left:605px;top:1100px;color:#b07af2">1</div>
<div class="t" style="left:611px;top:1100px;color:#e2e2e2">] = KS_EXTRA;</div>
<div class="t" style="left:497px;top:1114px;color:#c9c9c2">156</div>
<div class="t" style="left:581px;top:1114px;color:#e2e2e2">buf[</div>
<div class="t" style="left:605px;top:1114px;color:#b07af2">2</div>
<div class="t" style="left:611px;top:1114px;color:#e2e2e2">] = (</div>
<div class="t" style="left:641px;top:1114px;color:#8ff0b4">int</div>
<div class="t" style="left:659px;top:1114px;color:#e2e2e2">)KE_CURSORHOLD;</div>
<div class="t" style="left:497px;top:1128px;color:#c9c9c2">157</div>
<div class="t" style="left:581px;top:1128px;color:#ead96c">return</div>
<div class="t" style="left:623px;top:1128px;color:#b07af2">3</div>
<div class="t" style="left:629px;top:1128px;color:#e2e2e2">;</div>
<div class="t" style="left:497px;top:1142px;color:#c9c9c2">158</div>
<div class="t" style="left:569px;top:1142px;color:#e2e2e2">}</div>
<div class="r" style="left:485px;top:1156px;width:468px;height:14px;background:#7499be"></div>
<div class="r" style="left:485px;top:1156px;width:48px;height:14px;background:#c6c19d"></div>
<div class="t" style="left:491px;top:1156px;color:#111111;-webkit-text-stroke:0.12px">NORMAL</div>
<svg class="r" style="left:533px;top:1156px" width="12" height="14" viewBox="0 0 12 14"><path d="M0 0H6L12 7L6 14H0Z" fill="#050505"/><path d="M0 0L6 7L0 14Z" fill="#c6c19d"/></svg>
<div class="t" style="left:551px;top:1156px;color:#e8e8e8">io.c</div>
<div class="t" style="left:719px;top:1156px;color:#e8e8e8">c</div>
<div class="r" style="left:743px;top:1156px;width:108px;height:14px;background:#c6c19d"></div>
<svg class="r" style="left:731px;top:1156px" width="12" height="14" viewBox="0 0 12 14"><path d="M6 0H12V14H6L0 7Z" fill="#050505"/><path d="M12 0L6 7L12 14Z" fill="#c6c19d"/></svg>
<div class="t" style="left:755px;top:1156px;color:#111111;-webkit-text-stroke:0.12px">27%</div>
<svg class="r" style="left:779px;top:1156px" width="6" height="14" viewBox="0 0 6 14"><path d="M2 1.2V9.8M2.6 10.5V4.9L5 10.5V4.9" stroke="#111111" stroke-width="1" fill="none"/></svg>
<div class="t" style="left:791px;top:1156px;color:#111111;-webkit-text-stroke:0.12px">113:</div>
<div class="t" style="left:827px;top:1156px;color:#111111;-webkit-text-stroke:0.12px">3</div>
<div class="r" style="left:851px;top:1156px;width:102px;height:14px;background:#e07a20"></div>
<svg class="r" style="left:845px;top:1156px" width="6" height="14" viewBox="0 0 6 14"><path d="M6 0V14L0 7Z" fill="#e07a20"/></svg>
<svg class="r" style="left:856px;top:1156px" width="10" height="10" viewBox="0 0 10 10"><g stroke="#111" stroke-width="0.9"><path d="M5 1.2V8.8M1.2 5H8.8M2.3 2.3L7.7 7.7M7.7 2.3L2.3 7.7M3.1 1.7L6.9 8.3M6.9 1.7L3.1 8.3M1.7 3.1L8.3 6.9M1.7 6.9L8.3 3.1"/></g><circle cx="5" cy="5" r="2.7" fill="#111"/></svg>
<div class="t" style="left:869px;top:1156px;color:#111111;-webkit-text-stroke:0.12px">trailing[302]</div>
<div class="t" style="left:5px;top:1170px;color:#e2e2e2">--No lines in buffer--</div>
</body></html>
